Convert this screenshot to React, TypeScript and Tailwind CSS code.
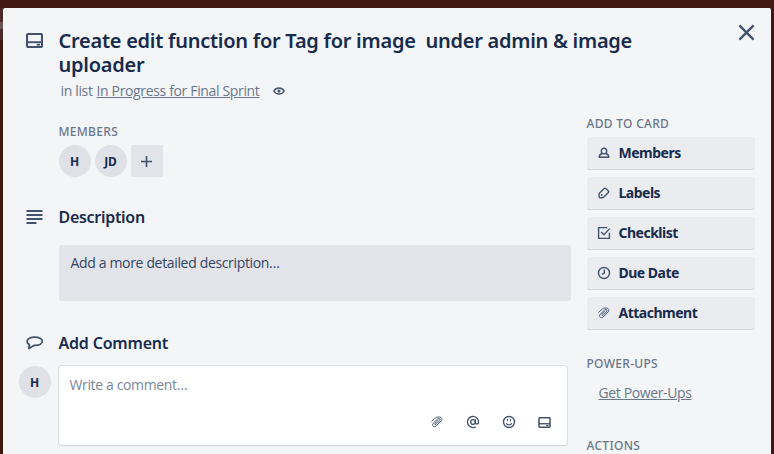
import type { ReactNode } from 'react';

type IconProps = { className?: string };

const CardIcon = ({ className = '' }: IconProps) => (
  <svg viewBox="0 0 17 15" className={className} fill="none" stroke="#42526e">
    <rect x="1" y="1" width="15" height="13" rx="1.2" strokeWidth="2.1" />
    <path d="M1 9.2H16" strokeWidth="1.9" />
    <path d="M10.7 11.7H14" strokeWidth="1.8" />
  </svg>
);

const LinesIcon = () => (
  <svg viewBox="0 0 17 15" className="h-[15px] w-[17px]" stroke="#42526e" strokeWidth="2">
    <path d="M0.5 1H16.5M0.5 5H16.5M0.5 9H16.5M0.5 13H10.5" />
  </svg>
);

const BubbleIcon = () => (
  <svg viewBox="0 0 18 14" className="h-[14px] w-[18px]" fill="none" stroke="#42526e" strokeWidth="1.8" strokeLinejoin="round">
    <path d="M3.3 8.6C1.8 7.7 1.1 6.6 1.1 5.5C1.1 2.9 4.6 1.1 8.8 1.1S16.3 2.9 16.3 5.3S13.1 9.4 9 9.4C7.9 9.4 7.3 9.6 6.5 10.2L2.9 12.5Z" />
  </svg>
);

const EyeIcon = () => (
  <svg viewBox="0 0 12 8" className="h-2 w-3" fill="none" stroke="#42526e">
    <path d="M0.8 4C2 1.8 3.8 0.9 6 0.9S10 1.8 11.2 4C10 6.2 8.2 7.1 6 7.1S2 6.2 0.8 4Z" strokeWidth="1.5" />
    <circle cx="6" cy="4" r="1.6" fill="#42526e" stroke="none" />
  </svg>
);

const ClipIcon = () => (
  <svg viewBox="0 0 14 14" className="h-[14px] w-[14px]" fill="none" stroke="#42526e" strokeWidth="0.95" strokeLinecap="round" strokeLinejoin="round">
    <path d="M1.7 6.3L5.2 3.1C6 2.4 6.8 2 7.8 2H9.6C11.6 2 12.6 4.3 11.2 5.9L6 11.2C4.1 13 1.3 10.4 3.1 8.4L7.7 3.9C9.2 2.6 10.9 4.2 9.6 5.7L6.1 9.2C5.2 10 4.3 9.1 5 8.3L8.3 5.1" />
  </svg>
);

const MemberIcon = () => (
  <svg viewBox="0 0 14 14" className="h-[14px] w-[14px]" fill="none" stroke="#42526e" strokeWidth="1.4" strokeLinejoin="round">
    <path d="M5.3 7.4C4.6 6.8 4.3 6 4.3 5C4.3 3.2 5.4 2.2 7 2.2S9.7 3.2 9.7 5C9.7 6 9.4 6.8 8.7 7.4C8 8 6 8 5.3 7.4Z" />
    <path d="M4.9 7.5C3.1 8.1 2.3 9.2 2.2 11.3H11.8C11.7 9.2 10.9 8.1 9.1 7.5" />
  </svg>
);

const LabelIcon = () => (
  <svg viewBox="0 0 14 14" className="h-[14px] w-[14px]" fill="none" stroke="#42526e" strokeWidth="1.4" strokeLinejoin="round">
    <path d="M2.6 6.9L7.1 2.6C7.6 2.1 8.3 2.1 8.8 2.6L11.3 4.9C11.9 5.4 11.9 6 11.4 6.6L6.9 11.1C6.5 11.5 6 11.7 5.4 11.7H3.2C2.5 11.7 2.1 11.3 2.1 10.6V8.2C2.1 7.7 2.2 7.3 2.6 6.9Z" />
    <circle cx="4.8" cy="9" r="0.9" fill="#42526e" stroke="none" />
  </svg>
);

const CheckIcon = () => (
  <svg viewBox="0 0 14 14" className="h-[14px] w-[14px]" fill="none" stroke="#42526e" strokeWidth="1.4">
    <path d="M10 1.6H1.6V12.4H12.4V6.8" />
    <path d="M4.2 6L7 8.8L12.6 2.6" />
  </svg>
);

const ClockIcon = () => (
  <svg viewBox="0 0 14 14" className="h-[14px] w-[14px]" fill="none" stroke="#42526e" strokeWidth="1.4">
    <circle cx="7" cy="7" r="5.5" />
    <path d="M7.3 3.4V7.1L4.9 8.4" />
  </svg>
);

const AtIcon = () => (
  <svg viewBox="0 0 24 24" className="h-[14px] w-[14px]" fill="none" stroke="#42526e" strokeWidth="2.4">
    <circle cx="12" cy="12" r="4" />
    <path d="M16 7.8V13C16 16.5 21.6 16.5 21.6 12A9.6 9.6 0 1 0 16.6 20.4" />
  </svg>
);

const SmileIcon = () => (
  <svg viewBox="0 0 14 14" className="h-[14px] w-[14px]" fill="none" stroke="#42526e" strokeWidth="1.4">
    <circle cx="7" cy="7" r="5.5" />
    <path d="M5.5 3.9V6.3M8.5 3.9V6.3" strokeWidth="1.1" />
    <path d="M4.2 8.1C4.9 10.5 9.1 10.5 9.8 8.1" strokeWidth="1.2" />
  </svg>
);

const Avatar = ({ children }: { children: string }) => (
  <div className="flex h-8 w-8 shrink-0 items-center justify-center rounded-full bg-[#dfe1e6] pt-px pr-px text-[12px] font-bold tracking-[-0.2px] text-[#172b4d]">
    {children}
  </div>
);

const Gutter = ({ children }: { children?: ReactNode }) => (
  <div className="flex h-5 w-[39.5px] shrink-0 items-center pl-[7px]">{children}</div>
);

const SideTitle = ({ children }: { children: string }) => (
  <h3 className="-ml-[0.5px] h-5 text-[12px] leading-5 font-medium tracking-[0.3px] text-[#6b778c]">{children}</h3>
);

const actions = [
  { label: 'Members', icon: <MemberIcon /> },
  { label: 'Labels', icon: <LabelIcon /> },
  { label: 'Checklist', icon: <CheckIcon /> },
  { label: 'Due Date', icon: <ClockIcon /> },
  { label: 'Attachment', icon: <ClipIcon /> },
];

export default function App() {
  return (
    <div className="flex h-[454px] w-[774px] overflow-hidden bg-[#421912] pt-2 font-['Noto_Sans','Open_Sans',sans-serif] text-[14px] leading-5 text-[#172b4d]">
      <div className="h-8 w-[3px] shrink-0 bg-[#4b2b29]">
        <div className="mt-[14px] h-[7px] w-[3px] bg-[#675353]" />
      </div>
      <div className="relative h-[446px] w-[768px] rounded-t-[2px] bg-[#f4f5f7] px-4 pt-[21px]">
        <button aria-label="Close" className="absolute top-[16px] right-[16px]">
          <svg viewBox="0 0 17 17" className="h-[17px] w-[17px]" stroke="#42526e" strokeWidth="2.3">
            <path d="M1.4 1.4L15.6 15.6M15.6 1.4L1.4 15.6" />
          </svg>
        </button>

        <header className="flex h-[72px]">
          <div className="w-[39.5px] shrink-0 pt-[4px] pl-[7px]">
            <CardIcon className="h-[15px] w-[17px]" />
          </div>
          <div>
            <h1 className="text-[20px] leading-6 font-semibold tracking-[-0.26px] whitespace-pre">
              {'Create edit function for Tag for image  under admin & image\nuploader'}
            </h1>
            <p className="mt-1 flex items-center pl-[2px] font-['Open_Sans','Noto_Sans',sans-serif] tracking-[-0.35px] whitespace-pre text-[#6b778c]">
              <span className="mr-[0.7px]">in list </span>
              <a className="underline">In Progress for Final Sprint</a>
              <span className="ml-[14px]">
                <EyeIcon />
              </span>
            </p>
          </div>
        </header>

        <div className="flex gap-4">
          <main className="w-[552px] pt-[21px]">
            <section className="pl-10">
              <SideTitle>MEMBERS</SideTitle>
              <div className="mt-[3px] flex gap-1">
                <Avatar>H</Avatar>
                <Avatar>JD</Avatar>
                <button aria-label="Add member" className="flex h-8 w-8 items-center justify-center rounded-[2px] bg-[#e2e4e9] pr-px">
                  <svg viewBox="0 0 11 11" className="h-[11px] w-[11px]" stroke="#42526e" strokeWidth="1.6">
                    <path d="M5.5 0V11M0 5.5H11" />
                  </svg>
                </button>
              </div>
            </section>

            <section className="mt-[30px]">
              <div className="flex">
                <Gutter><LinesIcon /></Gutter>
                <h2 className="text-[16px] leading-5 font-semibold tracking-[-0.3px]">Description</h2>
              </div>
              <div className="mt-[18px] ml-10 h-14 rounded-[3px] bg-[#e2e4ea] px-[11.5px] pt-2 font-['Open_Sans','Noto_Sans',sans-serif] text-[#344563]">
                <span className="tracking-[-0.34px]">Add a more detailed description…</span>
              </div>
            </section>

            <section className="mt-8">
              <div className="flex">
                <Gutter><BubbleIcon /></Gutter>
                <h2 className="text-[16px] leading-5 font-semibold tracking-[-0.2px]">Add Comment</h2>
              </div>
              <div className="mt-[13px] flex gap-2">
                <Avatar>H</Avatar>
                <div className="flex h-[79px] w-[508px] flex-col justify-between rounded-[3px] bg-white px-[10.5px] pt-[9px] pb-4 shadow-[0_1px_1px_#cfd3da,0_0_0_1px_#dfe1e6]">
                  <span className="font-['Open_Sans','Noto_Sans',sans-serif] tracking-[-0.36px] text-[#7a869a]">Write a comment…</span>
                  <div className="flex h-[14px] items-center justify-end gap-[22px] pr-[5.5px]">
                    <ClipIcon />
                    <AtIcon />
                    <SmileIcon />
                    <CardIcon className="h-[11px] w-[13px]" />
                  </div>
                </div>
              </div>
            </section>
          </main>

          <aside className="w-[168px] pt-[13px]">
            <SideTitle>ADD TO CARD</SideTitle>
            <div className="mt-[3px] flex flex-col gap-2">
              {actions.map((a) => (
                <button key={a.label} className="flex h-8 items-center gap-[7.5px] rounded-[3px] bg-[#ebecf0] pl-[10px] font-bold tracking-[-0.5px] shadow-[0_1px_0_#d5d8df]">
                  {a.icon}
                  <span>{a.label}</span>
                </button>
              ))}
            </div>
            <div className="mt-[25px]">
              <SideTitle>POWER-UPS</SideTitle>
              <a className="mt-[9px] mb-[33px] ml-[11.5px] block font-['Open_Sans','Noto_Sans',sans-serif] tracking-[-0.38px] text-[#6b778c] underline">Get Power-Ups</a>
              <SideTitle>ACTIONS</SideTitle>
            </div>
          </aside>
        </div>
      </div>
    </div>
  );
}
